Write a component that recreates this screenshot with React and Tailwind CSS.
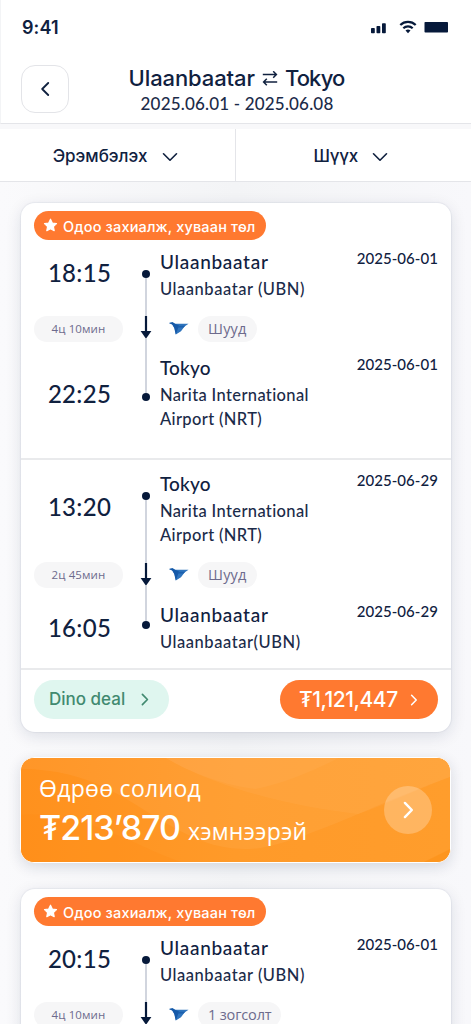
import { ChevronDown } from "lucide-react";

function Bird() {
  return (
    <svg width="20" height="13" viewBox="0 0 20 13" className="block">
      <path d="M0 1 3.600.3 6 1.800h13.500L15.500 4.600 12 9.200 6.800 12.400 5.600 6 3.400 2.400z" fill="#2f74bd" />
      <path d="M0 1 3.600.3 6 1.800l4 1.600L8.600 7.600 6.800 12.400 5.200 6 3.200 2.400z" fill="#1559a8" />
      <path d="M9 3.800h7.200L14.600 5.600H8.600z" fill="#1b5fae" />
    </svg>
  );
}

function Star() {
  return (
    <svg width="15" height="15" viewBox="0 0 15 15" className="block shrink-0">
      <path
        d="M7.500 1.200 9.300 5l4.200.6-3.100 2.900.8 4.200-3.700-2-3.700 2 .8-4.200L1.500 5.600 5.700 5z"
        fill="#fff"
        stroke="#fff"
        strokeWidth="1.200"
        strokeLinejoin="round"
      />
    </svg>
  );
}

function ArrowDown() {
  return (
    <svg width="12" height="23" viewBox="0 0 12 23" className="block shrink-0">
      <path d="M6 0v17" stroke="#06193a" strokeWidth="2.200" />
      <path d="M.6 15h10.800L6 22.800z" fill="#06193a" />
    </svg>
  );
}

function ChevronRight({ w, h, stroke, weight }) {
  return (
    <svg width={w} height={h} viewBox="0 0 8 14" className="block shrink-0">
      <path
        d="M1.200 1.500 6.600 7l-5.400 5.500"
        fill="none"
        stroke={stroke}
        strokeWidth={weight}
        strokeLinecap="round"
        strokeLinejoin="round"
      />
    </svg>
  );
}

function Badge() {
  return (
    <div className="ml-[13px] flex h-[29px] w-[232px] items-center rounded-full bg-[#ff7930] pl-[9px] text-white">
      <Star />
      <span className="ml-[5px] pt-[2px] font-[Inter,sans-serif] text-[14.5px] leading-5 font-medium tracking-[0.16px] whitespace-nowrap">
        Одоо захиалж, хуваан төл
      </span>
    </div>
  );
}

function Stop({ name, sub, date }) {
  return (
    <div>
      <div className="flex h-[26px] items-start justify-between text-[19px] leading-[27px] font-medium">
        <span className={name === "Tokyo" ? "tracking-[0.15px]" : "tracking-[0.7px]"}>{name}</span>
        <span className="text-[15px] leading-[20px] font-medium tracking-[0.05px]">{date}</span>
      </div>
      <p
        className={`mt-[3px] text-[16.5px] leading-[24.5px] font-medium whitespace-pre-line text-[#1b2b49] ${
          name === "Tokyo" ? "tracking-[0.36px]" : "tracking-[0.54px]"
        }`}
      >
        {sub}
      </p>
    </div>
  );
}

const variants = {
  outbound: {
    leg: "pb-[26.5px]",
    time: "pt-[18px]",
    pill: "mt-[27.5px]",
    time2: "mt-[37px]",
    track: "pt-[29.5px]",
    line1: "h-[38.5px]",
    line2: "h-[54px]",
    text: "pt-[8px]",
    stop2: "mt-[12px]",
  },
  inbound: {
    leg: "pb-[14px]",
    time: "pt-[31.5px]",
    pill: "mt-[40px]",
    time2: "mt-[25px]",
    track: "pt-[31.5px]",
    line1: "h-[63px]",
    line2: "h-[35px]",
    text: "pt-[9.5px]",
    stop2: "mt-[13px]",
  },
};

function Leg({ variant, depart, arrive, duration, stops, from, to }) {
  const v = variants[variant];
  return (
    <div className={`flex items-start pr-[13px] pl-[13px] ${v.leg}`}>
      <div className={`flex w-[89px] flex-col items-center ${v.time}`}>
        <span className="pl-[2px] text-[24px] leading-[30px] font-medium tracking-[0.3px]">{depart}</span>
        <span
          className={`flex h-[26px] w-full items-center justify-center rounded-full bg-[#f6f6f7] font-['Open_Sans',sans-serif] text-[11.5px] tracking-[0.12px] text-[#6d6b8d] ${v.pill}`}
        >
          {duration}
        </span>
        {arrive && (
          <span className={`pl-[2px] text-[24px] leading-[30px] font-medium tracking-[0.3px] ${v.time2}`}>{arrive}</span>
        )}
      </div>
      <div className={`ml-4 flex w-[14px] flex-col items-center ${v.track}`}>
        <i className="block size-2 rounded-full bg-[#06193a]" />
        <i className={`block w-[2px] bg-[#d1d5de] ${v.line1}`} />
        <ArrowDown />
        <i className={`block w-[2px] bg-[#d1d5de] ${v.line2}`} />
        <i className="block size-2 rounded-full bg-[#06193a]" />
      </div>
      <div className={`ml-[7px] flex-1 ${v.text}`}>
        <Stop {...from} />
        <div className="mt-[14px] flex h-[26px] items-center pl-[9px]">
          <Bird />
          <span
            className={`ml-[9px] flex h-[26px] items-center rounded-full bg-[#f6f6f7] px-[10px] font-['Open_Sans',sans-serif] text-[14.5px] text-[#6d6b8d] ${
              stops === "Шууд" ? "tracking-[0.2px]" : "tracking-[-0.15px]"
            }`}
          >
            {stops}
          </span>
        </div>
        {to && (
          <div className={v.stop2}>
            <Stop {...to} />
          </div>
        )}
      </div>
    </div>
  );
}

function Card({ children }) {
  return (
    <section className="mr-[20px] ml-[21px] shrink-0 rounded-[14px] bg-white pt-2 shadow-[0_0_1px_1px_rgba(20,35,70,0.05),0_4px_16px_rgba(20,35,70,0.12)]">
      {children}
    </section>
  );
}

function Header() {
  return (
    <header className="h-[124px] shrink-0 border-b border-l border-[#e4e5e9] border-l-[#f3f4f6] bg-white">
      <div className="flex items-start justify-between pt-[17px] pr-[23px] pl-[21px]">
        <span className="font-[Inter,sans-serif] text-[18px] leading-[22px] font-semibold tracking-[0.1px]">9:41</span>
        <svg width="77" height="14" viewBox="0 0 77 14" className="mt-[3px] block" fill="#06193a">
          <rect x="0" y="8" width="3.800" height="5.200" rx=".8" />
          <rect x="5.500" y="6" width="3.800" height="7.200" rx=".8" />
          <rect x="11" y="3.200" width="3.800" height="10" rx=".8" />
          <g fill="none" stroke="#06193a" strokeWidth="2.200">
            <path d="M29.300 5a11 11 0 0 1 15.400 0" />
            <path d="M32.300 8.300a6.800 6.800 0 0 1 9.400 0" />
          </g>
          <path d="M34.500 10.600a3.700 3.700 0 0 1 5 0l-2.500 2.600z" />
          <rect x="53.500" y="2" width="23.500" height="10.500" rx=".8" />
        </svg>
      </div>
      <div className="mt-[25px] flex items-start pl-[20px]">
        <button className="mt-px flex size-12 items-center justify-center rounded-[14px] border border-[#e3e4e8] bg-white">
          <svg width="9" height="14" viewBox="0 0 9 14" className="block">
            <path d="M7.200 1 1.200 7l6 6" fill="none" stroke="#10213f" strokeWidth="1.800" strokeLinecap="round" strokeLinejoin="round" />
          </svg>
        </button>
        <div className="ml-[59px] flex w-[217px] flex-col items-center whitespace-nowrap">
          <h1 className="flex items-center font-[Inter,sans-serif] text-[22px] leading-[29px] font-medium">
            <span className="tracking-[-0.1px]">Ulaanbaatar</span>
            <svg width="16" height="15" viewBox="0 0 16 15" className="mx-[7px] block" fill="none" stroke="#10213f" strokeWidth="1.500">
              <path d="M.8 3.500h13.400M11.200.3 14.400 3.500l-3.200 3.200M15.200 11H1.800M4.800 7.800 1.600 11l3.200 3.200" />
            </svg>
            <span className="tracking-[-0.85px]">Tokyo</span>
          </h1>
          <p className="-mt-px pl-px text-[17px] leading-[23px] font-medium tracking-[0.18px] text-[#1b2b49]">2025.06.01 - 2025.06.08</p>
        </div>
      </div>
    </header>
  );
}

function Banner() {
  return (
    <section className="relative mr-[20px] ml-[20px] flex h-[106px] shrink-0 items-center justify-between overflow-hidden rounded-[14px] border-[1.5px] border-white bg-[#ff9a28] pr-[18px] pl-[18px] text-white shadow-[0_4px_14px_rgba(20,35,70,0.14)]">
      <svg className="absolute inset-0 size-full" viewBox="0 0 430 104" preserveAspectRatio="none">
        <defs>
          <linearGradient id="base" x1="0" x2="1">
            <stop offset="0" stopColor="#ff911d" />
            <stop offset=".5" stopColor="#ff9a29" />
            <stop offset="1" stopColor="#ff9d2c" />
          </linearGradient>
        </defs>
        <path d="M0 0H430V104H0z" fill="url(#base)" />
        <path d="M0 11C70 11 105 42 145 65S205 91 228 91 290 76 338 56 400 30 430 19V0H0z" fill="#fff" opacity=".05" />
        <path d="M145 0C200 32 280 50 338 56 370 45 400 30 430 19V0z" fill="#fff" opacity=".04" />
        <path d="M145 0C180 20 210 28 235 31 265 25 295 12 318 0z" fill="#fff" opacity=".04" />
        <path d="M0 57C60 52 110 86 160 104H0z" fill="#ff8a14" opacity=".25" />
        <path d="M404 104 430 91V104z" fill="#f98500" opacity=".3" />
      </svg>
      <div className="relative pt-[5px] whitespace-nowrap">
        <p className="font-['Open_Sans',sans-serif] text-[23px] leading-[32px] tracking-[0.29px]">Өдрөө солиод</p>
        <p className="flex items-baseline pt-[2px] leading-[44px]">
          <span className="font-[Inter,sans-serif] text-[34px] font-medium tracking-[-1px]">₮213’870</span>
          <span className="ml-[8px] font-['Open_Sans',sans-serif] text-[23px] tracking-[0.2px]">хэмнээрэй</span>
        </p>
      </div>
      <div className="relative flex size-12 items-center justify-center rounded-full bg-white/25">
        <ChevronRight w={11} h={18} stroke="#fff" weight={1.9} />
      </div>
    </section>
  );
}

const ubn = { name: "Ulaanbaatar", sub: "Ulaanbaatar (UBN)", date: "2025-06-01" };
const nrt = { name: "Tokyo", sub: "Narita International\nAirport (NRT)" };

export default function App() {
  return (
    <main className="flex h-screen w-full flex-col overflow-hidden bg-[#f8f8fa] font-[Lato,sans-serif] text-[#10213f]">
      <Header />
      <nav className="mt-[5px] flex h-[53px] shrink-0 border-b border-[#e4e5e9] bg-white font-[Inter,sans-serif] text-[17px] font-medium">
        <button className="flex w-[236px] items-center justify-center gap-[10px] border-r border-[#e4e5e9] pt-[3px] pl-px">
          Эрэмбэлэх
          <ChevronDown size={26} strokeWidth={1.5} />
        </button>
        <button className="flex flex-1 items-center justify-center gap-[9.5px] pt-[3px] tracking-[-0.3px]">
          Шүүх
          <ChevronDown size={26} strokeWidth={1.5} />
        </button>
      </nav>
      <div className="flex flex-1 flex-col overflow-hidden bg-linear-to-r from-[#fafafc] via-[#f3f4f6] to-[#f8f8fb] pt-[21px]">
        <Card>
          <Badge />
          <Leg variant="outbound" depart="18:15" arrive="22:25" duration="4ц 10мин" stops="Шууд" from={ubn} to={{ ...nrt, date: "2025-06-01" }} />
          <hr className="border-t-2 border-[#e9eaec]" />
          <Leg
            variant="inbound"
            depart="13:20"
            arrive="16:05"
            duration="2ц 45мин"
            stops="Шууд"
            from={{ ...nrt, date: "2025-06-29" }}
            to={{ name: "Ulaanbaatar", sub: "Ulaanbaatar(UBN)", date: "2025-06-29" }}
          />
          <hr className="border-t-2 border-[#e9eaec]" />
          <div className="flex items-center justify-between px-[13px] pt-[10px] pb-[13px] font-[Inter,sans-serif]">
            <button className="flex h-[39px] w-[135px] items-center rounded-full bg-[#dff6ef] pl-[15px] text-[17px] font-medium text-[#418a70]">
              Dino deal
              <span className="ml-[16px]">
                <ChevronRight w={8} h={13} stroke="#418a70" weight={1.8} />
              </span>
            </button>
            <button className="flex h-[39px] w-[158px] items-center rounded-full bg-[#ff7930] pl-[19px] text-[21px] font-medium text-white">
              <span className="pt-px tracking-[-0.45px]">₮1,121,447</span>
              <span className="ml-[12px]">
                <ChevronRight w={8} h={12} stroke="#fff" weight={1.8} />
              </span>
            </button>
          </div>
        </Card>
        <div className="mt-[25px] flex shrink-0 flex-col">
          <Banner />
        </div>
        <div className="mt-[26px] shrink-0">
          <Card>
            <Badge />
            <Leg variant="outbound" depart="20:15" duration="4ц 10мин" stops="1 зогсолт" from={ubn} />
          </Card>
        </div>
      </div>
    </main>
  );
}
